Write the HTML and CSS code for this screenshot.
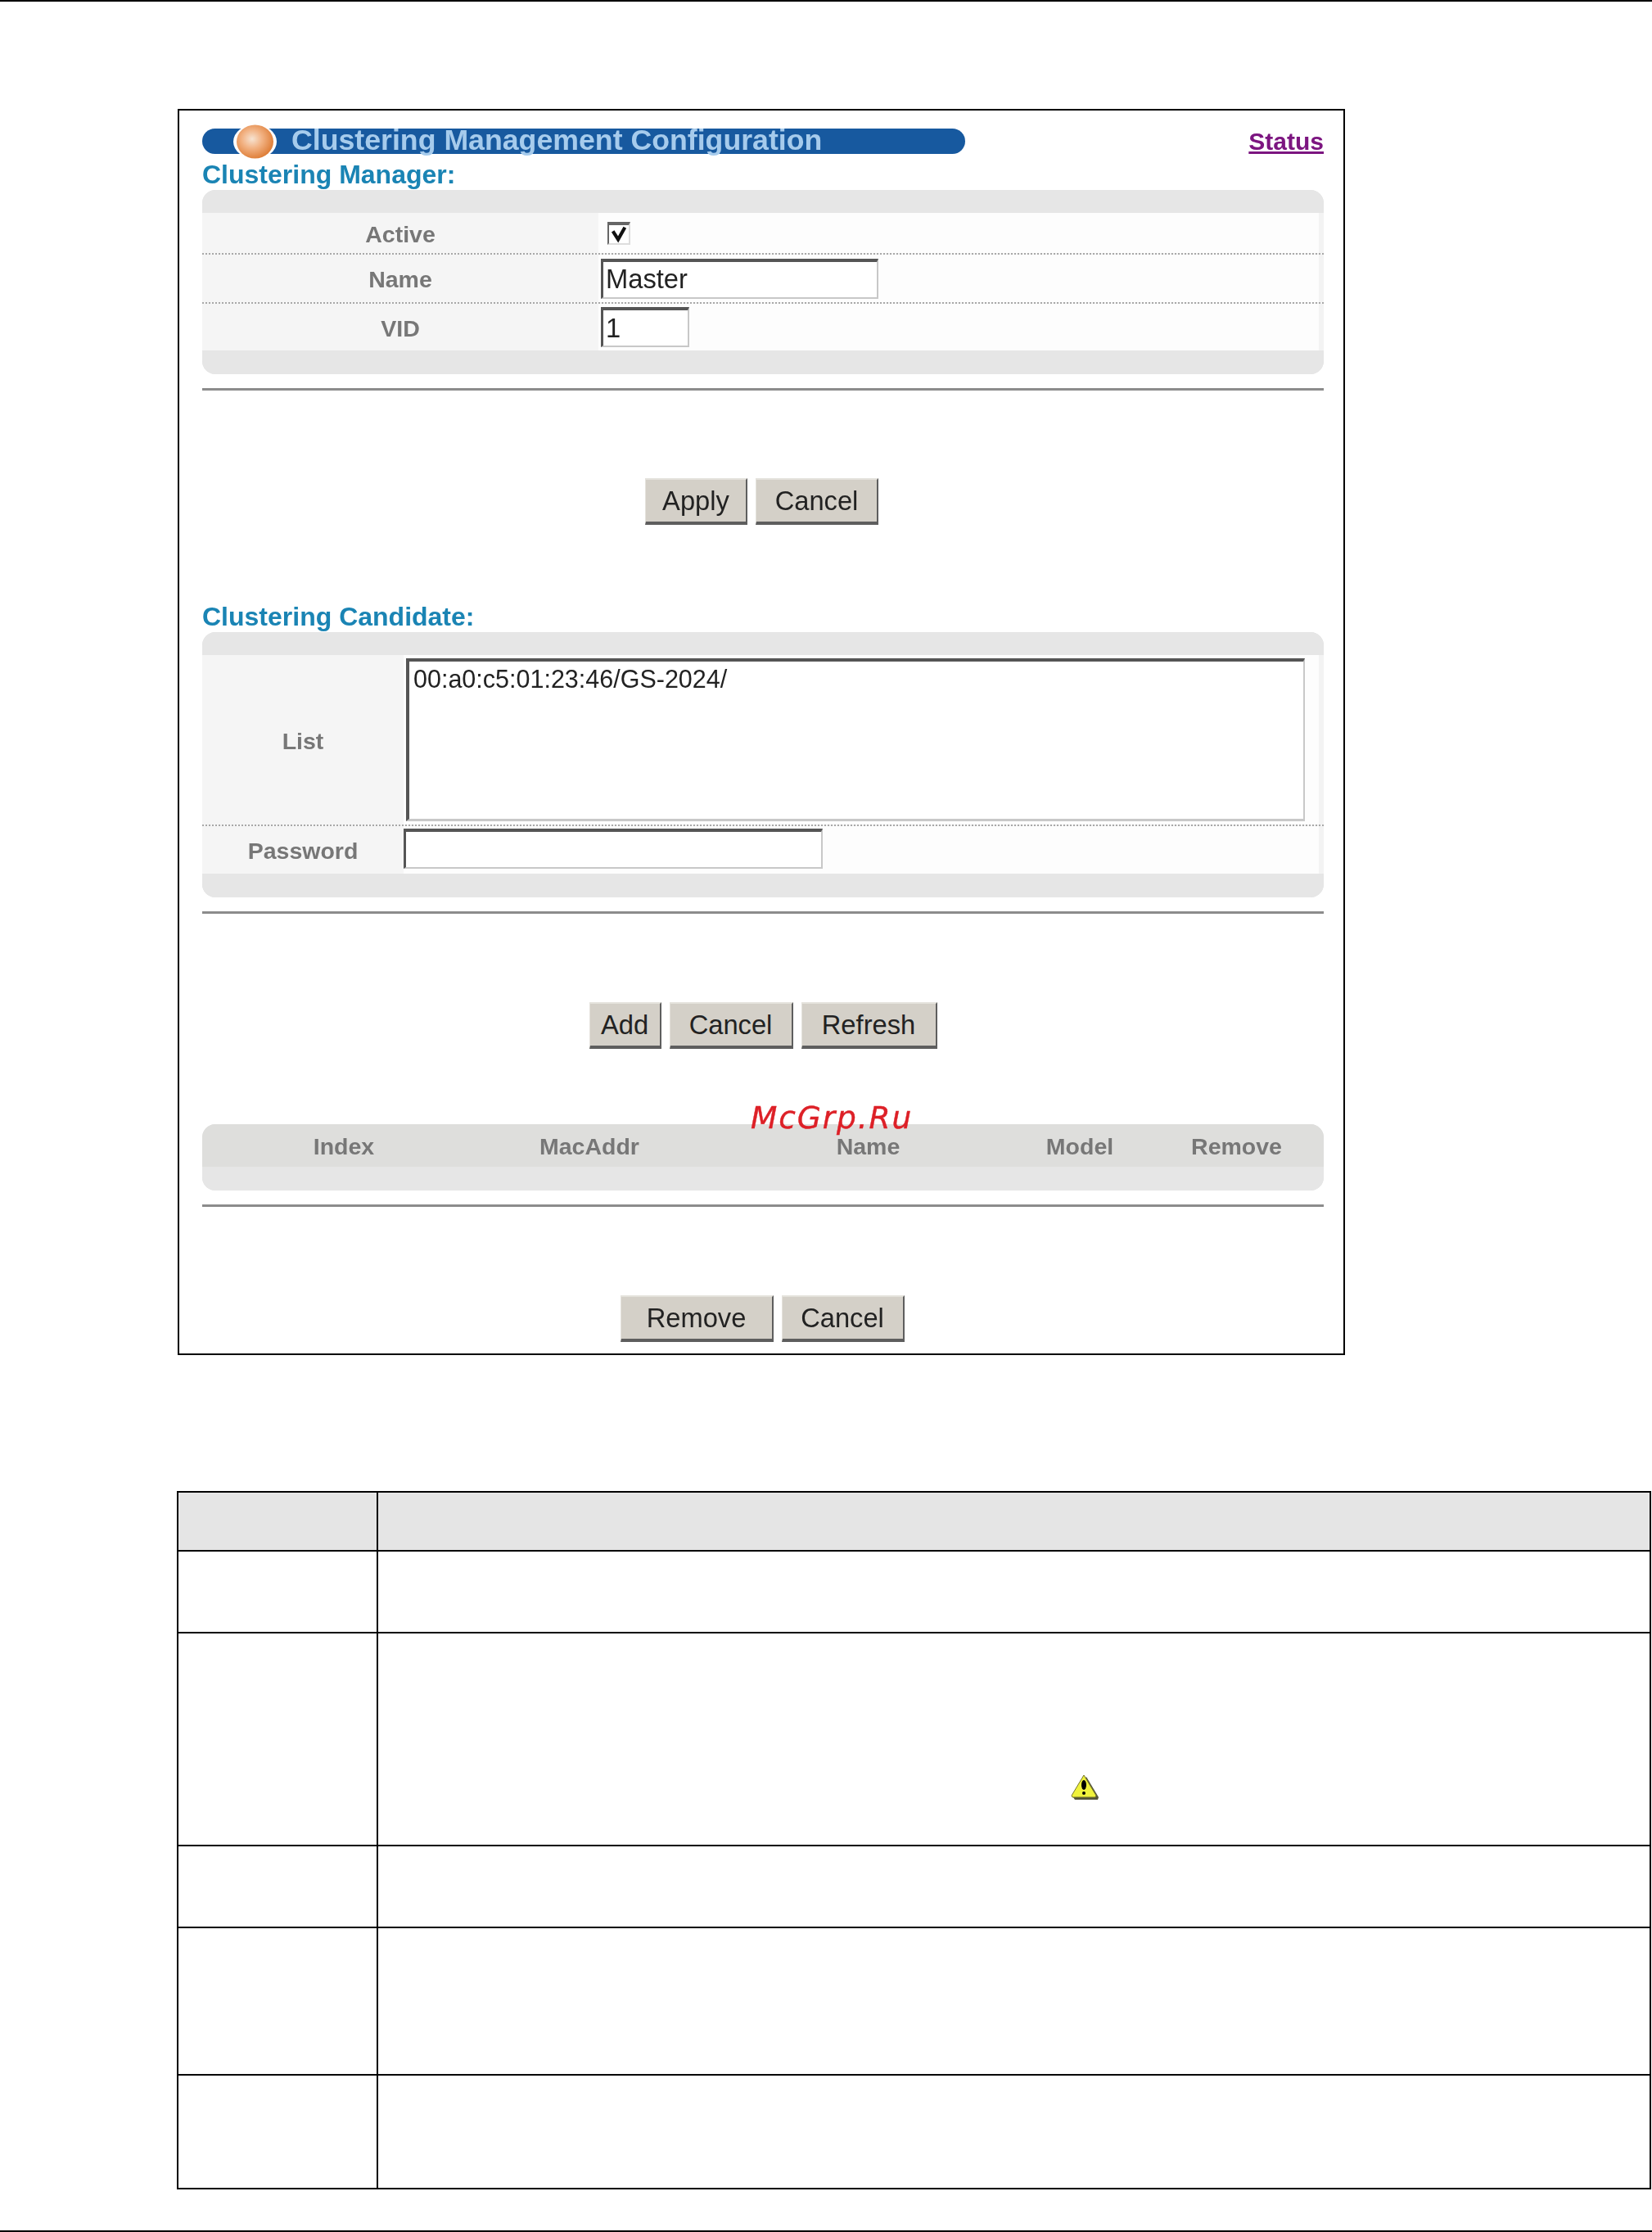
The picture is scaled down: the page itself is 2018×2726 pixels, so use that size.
FILE: index.html
```html
<!DOCTYPE html>
<html lang="en">
<head>
<meta charset="utf-8">
<title>Clustering Management Configuration</title>
<link rel="stylesheet" href="styles.css">
</head>
<body>
<div class="page">
  <div class="frame">
    <div class="shot">
      <div class="title-row">
        <div class="title-bar">
          <svg class="ball" viewBox="0 0 53 42" width="53" height="42" aria-hidden="true">
            <defs>
              <radialGradient id="ballFill" cx="0.42" cy="0.42" r="0.62">
                <stop offset="0" stop-color="#f6e3d2"/>
                <stop offset="0.45" stop-color="#f2b283"/>
                <stop offset="1" stop-color="#dd7a32"/>
              </radialGradient>
            </defs>
            <ellipse cx="26.5" cy="21" rx="26.5" ry="21" fill="#fff"/>
            <ellipse cx="26.5" cy="21" rx="22.5" ry="20.5" fill="url(#ballFill)"/>
          </svg>
          <span class="title-text">Clustering Management Configuration</span>
        </div>
        <a class="status-link" href="#">Status</a>
      </div>

      <h2 class="section-title">Clustering Manager:</h2>
      <div class="panel">
        <div class="band"></div>
        <div class="row row-active">
          <div class="label label-mgr">Active</div>
          <div class="value"><span class="checkbox"><svg viewBox="0 0 24 24" width="24" height="22" aria-hidden="true"><path d="M4 8 L11 19 L20 3" fill="none" stroke="#111" stroke-width="4.5"/></svg></span></div>
        </div>
        <div class="row row-name">
          <div class="label label-mgr">Name</div>
          <div class="value"><input class="field field-name" type="text" value="Master"></div>
        </div>
        <div class="row row-vid">
          <div class="label label-mgr">VID</div>
          <div class="value"><input class="field field-vid" type="text" value="1"></div>
        </div>
        <div class="band band-bottom"></div>
      </div>
      <div class="rule"></div>
      <div class="buttons buttons-apply">
        <button class="btn btn-apply" type="button">Apply</button>
        <button class="btn btn-cancel" type="button">Cancel</button>
      </div>

      <h2 class="section-title section-candidate">Clustering Candidate:</h2>
      <div class="panel">
        <div class="band"></div>
        <div class="row row-list">
          <div class="label label-cand">List</div>
          <div class="value value-list"><textarea class="list-box" readonly>00:a0:c5:01:23:46/GS-2024/</textarea></div>
        </div>
        <div class="row row-password">
          <div class="label label-cand">Password</div>
          <div class="value value-password"><input class="field field-password" type="password"></div>
        </div>
        <div class="band band-bottom"></div>
      </div>
      <div class="rule"></div>
      <div class="buttons buttons-add">
        <button class="btn btn-add" type="button">Add</button>
        <button class="btn btn-cancel-wide" type="button">Cancel</button>
        <button class="btn btn-refresh" type="button">Refresh</button>
      </div>

      <div class="panel panel-members">
        <div class="members-head">
          <div>Index</div>
          <div>MacAddr</div>
          <div>Name</div>
          <div>Model</div>
          <div>Remove</div>
        </div>
        <div class="band band-bottom"></div>
      </div>
      <div class="rule"></div>
      <div class="buttons buttons-remove">
        <button class="btn btn-remove" type="button">Remove</button>
        <button class="btn btn-cancel" type="button">Cancel</button>
      </div>
    </div>
  </div>

  <table class="doc-table">
    <tbody>
      <tr class="doc-head"><td class="doc-key"></td><td></td></tr>
      <tr class="doc-r1"><td class="doc-key"></td><td></td></tr>
      <tr class="doc-r2"><td class="doc-key"></td><td class="doc-note"><svg class="warn" viewBox="0 0 35 31" width="35" height="31" aria-hidden="true"><path d="M19 3 L34 28 L33 31 L5 31 L3 28 Z" fill="#55553a"/><path d="M16 1 L31 26 L30 28 L2 28 L1 26 Z" fill="#f0f23c" stroke="#77772a" stroke-width="1"/><ellipse cx="16" cy="13" rx="3" ry="6" fill="#000"/><circle cx="16" cy="23" r="2" fill="#000"/></svg></td></tr>
      <tr class="doc-r3"><td class="doc-key"></td><td></td></tr>
      <tr class="doc-r4"><td class="doc-key"></td><td></td></tr>
      <tr class="doc-r5"><td class="doc-key"></td><td></td></tr>
    </tbody>
  </table>
  <div class="watermark">McGrp.Ru</div>
</div>
</body>
</html>
```

FILE: styles.css
```css
* { box-sizing: border-box; }
html, body { margin: 0; padding: 0; background: #fff; }
body { font-family: "Liberation Sans", Arial, sans-serif; }

.page {
  position: relative;
  width: 2018px;
  height: 2726px;
  padding-top: 133px;
  border-top: 2px solid #000;
  border-bottom: 2px solid #000;
}

.frame {
  width: 1426px;
  margin-left: 217px;
  margin-top: -2px;
  border: 2px solid #000;
  background: #fff;
  padding: 22px 24px 14px 28px;
}

.shot { filter: blur(0.7px); }

.title-row { display: flex; justify-content: space-between; height: 31px; }
.title-bar {
  position: relative;
  width: 932px;
  height: 31px;
  border-radius: 16px;
  background: #17599f;
  padding-left: 109px;
  color: #a6cbec;
  font-size: 35.7px;
  font-weight: 700;
  line-height: 29px;
  white-space: nowrap;
}
.ball { position: absolute; left: 38px; top: -5px; }
.status-link {
  color: #7c1580;
  font-size: 30px;
  font-weight: 700;
  line-height: 31px;
  text-decoration: underline;
}

.section-title {
  margin: 0;
  height: 44px;
  padding-top: 7px;
  color: #1a84b4;
  font-size: 32px;
  font-weight: 700;
  line-height: 36px;
}
.section-candidate { margin-top: 87px; }

.panel { border-radius: 16px; overflow: hidden; background: #e6e6e6; }
.band { height: 28px; background: #e6e6e6; }
.band-bottom { height: 29px; }

.row {
  display: flex;
  background: #f5f5f5;
  border-bottom: 2px dotted #a8a8a8;
}
.row-active { height: 51px; }
.row-name { height: 60px; }
.row-vid { height: 57px; border-bottom: 0; }
.row-list { height: 209px; }
.row-password { height: 58px; border-bottom: 0; }

.label {
  display: flex;
  align-items: center;
  justify-content: center;
  flex: none;
  padding-top: 3px;
  color: #777;
  font-size: 28.5px;
  font-weight: 700;
}
.label-mgr { width: 484px; }
.label-cand { width: 246px; }

.value {
  flex: 1;
  display: flex;
  align-items: center;
  padding-left: 3px;
  background: #fdfdfd;
  border-right: 6px solid #f3f3f3;
}
.value-list { align-items: flex-start; padding-top: 4px; }
.value-password { padding-left: 0; align-items: flex-start; padding-top: 3px; }

.checkbox {
  display: block;
  width: 28px;
  height: 28px;
  margin-left: 8px;
  border-style: solid;
  border-width: 4px 2px 2px 2px;
  border-color: #666 #ddd #ddd #666;
  background: #fff;
}
.checkbox svg { display: block; }

.field, .list-box {
  display: block;
  border-style: solid;
  border-width: 4px 2px 2px 3px;
  border-color: #555 #c8c8c8 #c8c8c8 #555;
  border-radius: 0;
  background: #fff;
  color: #222;
  font-family: "Liberation Sans", Arial, sans-serif;
  font-size: 32.7px;
  padding: 0 3px;
  outline: 0;
  margin: 0;
}
.field-name { width: 339px; height: 49px; }
.field-vid { width: 108px; height: 49px; }
.field-password { width: 512px; height: 49px; }
.list-box {
  width: 1098px;
  height: 199px;
  resize: none;
  overflow: hidden;
  font-size: 30.5px;
  line-height: 36px;
  padding: 3px 5px;
  border-width: 4px 2px 3px 4px;
}

.rule { height: 3px; margin-top: 17px; background: #8c8c8c; }

.buttons { display: flex; justify-content: center; gap: 10px; }
.buttons-apply { margin-top: 107px; margin-right: 3px; }
.buttons-add { margin-top: 108px; }
.buttons-remove { margin-top: 108px; margin-right: 2px; }

.btn {
  height: 57px;
  padding: 0;
  background: #d4d0c8;
  border-style: solid;
  border-width: 2px 2px 4px 1px;
  border-color: #e4e2dc #5e5e5e #5e5e5e #e4e2dc;
  border-radius: 0;
  color: #222;
  font-family: "Liberation Sans", Arial, sans-serif;
  font-size: 32.7px;
}
.btn-apply { width: 125px; }
.btn-cancel { width: 150px; }
.btn-cancel-wide { width: 151px; }
.btn-add { width: 88px; }
.btn-refresh { width: 166px; }
.btn-remove { width: 187px; }

.panel-members { margin-top: 92px; }
.members-head {
  display: grid;
  grid-template-columns: 266px 334px 347px 170px 213px;
  align-items: center;
  height: 52px;
  padding-left: 40px;
  padding-top: 3px;
  background: #dededc;
  color: #777;
  font-size: 28.5px;
  font-weight: 700;
  text-align: center;
}

.doc-table {
  width: 1801px;
  margin-left: 216px;
  margin-top: 166px;
  border-collapse: collapse;
  table-layout: fixed;
}
.doc-table td { border: 2px solid #000; padding: 0; background: #fff; }
.doc-key { width: 244px; }
.doc-head td { background: #e5e5e5; }
.doc-head { height: 72px; }
.doc-r1 { height: 100px; }
.doc-r2 { height: 260px; }
.doc-r3 { height: 100px; }
.doc-r4 { height: 180px; }
.doc-r5 { height: 139px; }
.doc-note { padding: 172px 0 0 846px !important; vertical-align: top; }
.warn { display: block; }

.watermark {
  position: absolute;
  left: 917px;
  top: 1341px;
  color: #dd2027;
  font-family: "DejaVu Sans", sans-serif;
  font-size: 37.5px;
  font-style: italic;
  letter-spacing: 1.9px;
  -webkit-text-stroke: 0.4px #dd2027;
  white-space: nowrap;
}
```
